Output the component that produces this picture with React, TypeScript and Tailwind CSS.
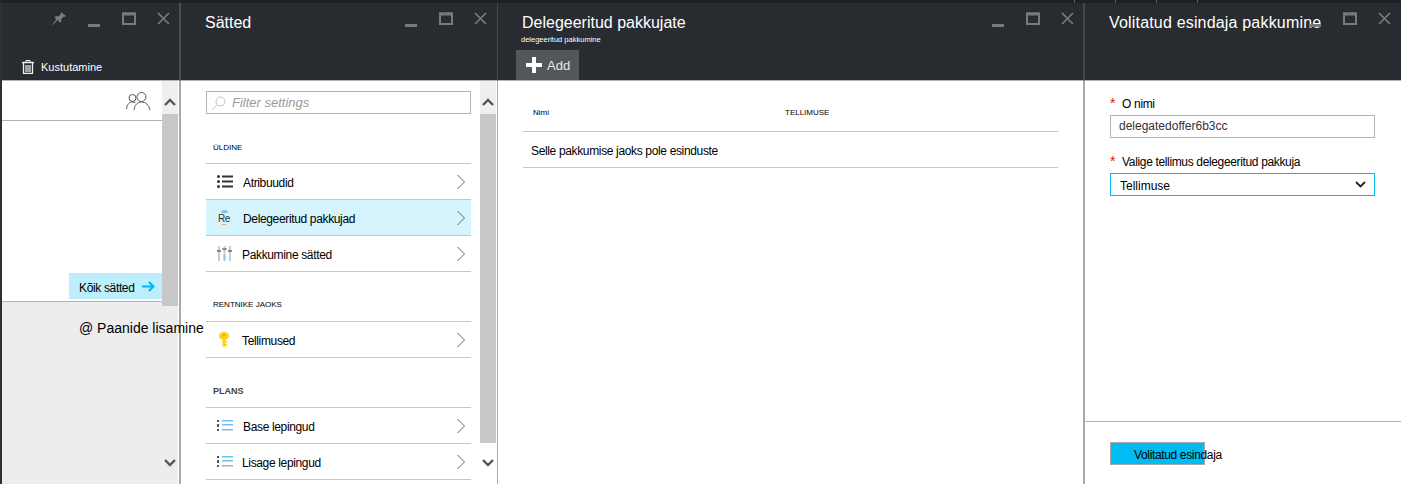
import React from 'react';

const FONT = 'font-["Liberation_Sans",Arial,sans-serif]';

function Controls({ pin, pad }: { pin?: boolean; pad: string }) {
  return (
    <div className={`flex shrink-0 items-start pt-[9px] ${pad}`}>
      {pin && (
        <svg width="14" height="13" viewBox="0 0 14 13" className="mr-[22px]" fill="#777b7f">
          <path d="M9 0 L14 4 L12.800 5 L11.800 4.600 L9 7.500 L9.500 9.500 L8 10.500 L5.500 8 L1 13 L0.500 12.500 L4.300 7 L2.500 5.300 L4 4 L6.300 4.500 L9.200 1.800 L8.500 1 Z" />
        </svg>
      )}
      <svg width="12" height="15" viewBox="0 0 12 15" className="mr-[22px]" fill="#777b7f">
        <rect x="0" y="12" width="12" height="3" />
      </svg>
      <svg width="14" height="13" viewBox="0 0 14 13" className="mr-[21px]" fill="none" stroke="#777b7f">
        <rect x="1" y="1.500" width="12" height="10.500" strokeWidth="2" />
        <rect x="1" y="1" width="12" height="2" fill="#777b7f" strokeWidth="1" />
      </svg>
      <svg width="13" height="13" viewBox="0 0 13 13" fill="none" stroke="#777b7f" strokeWidth="1.700">
        <path d="M1 1 L12 12 M12 1 L1 12" />
      </svg>
    </div>
  );
}

function Scroller({ thumb, bottom }: { thumb: string; bottom: string }) {
  return (
    <div className="flex w-[16px] shrink-0 flex-col items-stretch">
      <div className="flex h-[33px] shrink-0 items-center justify-center bg-[#efefef] pt-[9px]">
        <svg width="12" height="8" viewBox="0 0 12 8" fill="none" stroke="#555" strokeWidth="2.400">
          <path d="M1 7 L6 2 L11 7" />
        </svg>
      </div>
      <div className={`${thumb} shrink-0 bg-[#c8c8c8]`} />
      <div className={`flex flex-1 items-end justify-center pb-[17px] ${bottom}`}>
        <svg width="12" height="8" viewBox="0 0 12 8" fill="none" stroke="#555" strokeWidth="2.400">
          <path d="M1 1 L6 6 L11 1" />
        </svg>
      </div>
    </div>
  );
}

function Chevron() {
  return (
    <svg width="10" height="16" viewBox="0 0 10 16" fill="none" stroke="#666" strokeWidth="1">
      <path d="M1.500 1 L8.500 8 L1.500 15" />
    </svg>
  );
}

function ListDark() {
  return (
    <svg width="16" height="13" viewBox="0 0 16 13" fill="#333">
      <circle cx="1.500" cy="1.500" r="1.500" />
      <rect x="5" y="0.500" width="11" height="2" />
      <circle cx="1.500" cy="6.500" r="1.500" />
      <rect x="5" y="5.500" width="11" height="2" />
      <circle cx="1.500" cy="11.500" r="1.500" />
      <rect x="5" y="10.500" width="11" height="2" />
    </svg>
  );
}

function ListBlue() {
  return (
    <svg width="16" height="11" viewBox="0 0 16 11">
      <g fill="#555">
        <rect x="0" y="0" width="2" height="2" />
        <rect x="0" y="4" width="2" height="3" />
        <rect x="0" y="9" width="2" height="2" />
      </g>
      <g fill="#6fc0ea">
        <rect x="5" y="0" width="11" height="1" />
        <rect x="5" y="4" width="11" height="1" />
        <rect x="5" y="9" width="11" height="1" />
      </g>
      <g fill="#c5dbe6">
        <rect x="5" y="1" width="11" height="1" />
        <rect x="5" y="5" width="11" height="1" />
        <rect x="5" y="10" width="11" height="1" />
      </g>
    </svg>
  );
}

function Sliders() {
  return (
    <svg width="15" height="15" viewBox="0 0 15 15">
      <g fill="#c4cdd2">
        <rect x="1" y="0" width="2" height="15" />
        <rect x="6.500" y="0" width="2" height="15" />
        <rect x="12" y="0" width="2" height="15" />
      </g>
      <g fill="#80868a">
        <rect x="0" y="4" width="4" height="2" />
        <rect x="11" y="4" width="4" height="2" />
        <rect x="5.500" y="2" width="4" height="2" />
      </g>
      <rect x="6.500" y="9" width="2" height="5" fill="#8ccbe8" />
    </svg>
  );
}

function KeyIcon() {
  return (
    <svg width="10" height="15" viewBox="0 0 10 15" fill="#fcd116">
      <path d="M5 0 C8 0 10 1.800 10 4 C10 5.800 8.500 7 6.500 7.600 L6.500 9 L8 9 L8 10.500 L6.500 10.500 L6.500 12 L8 12 L8 13.500 L5 15 L3.500 14 L3.500 7.600 C1.500 7 0 5.800 0 4 C0 1.800 2 0 5 0 Z" />
      <rect x="3.500" y="2.500" width="3" height="1.500" fill="#e0a800" />
    </svg>
  );
}

function ReIcon() {
  return (
    <div className="-mt-[1px] flex w-[14px] flex-col items-center text-[10px] leading-[10px] text-[#333]">
      <div className="mb-[1px] h-[3px] w-[7px] rounded-t-full bg-[#7ec6e8]" />
      <span>Re</span>
      <div className="h-[1px] w-[4px] bg-[#e8a05a]" />
    </div>
  );
}

function Row({
  icon,
  label,
  active,
  gap,
}: {
  icon: React.ReactNode;
  label: string;
  active?: boolean;
  gap: string;
}) {
  return (
    <div
      className={`flex h-[36px] items-center border-b border-[#c8c8c8] pr-[5px] pl-[11px] text-[12px] tracking-[-0.35px] text-black ${
        active ? 'bg-[#d5f4fd]' : ''
      }`}
    >
      <div className={`flex ${gap} shrink-0 items-center`}>{icon}</div>
      <span className="flex-1 pt-[2px] whitespace-nowrap">{label}</span>
      <Chevron />
    </div>
  );
}

export default function App() {
  return (
    <div className={`flex h-[484px] w-[1401px] flex-col overflow-hidden bg-[#282c31] ${FONT}`}>
      {/* top strip */}
      <div className="flex h-[3px] shrink-0 justify-end gap-[40px] bg-[#1e2125] pr-[203px]">
        <div className="h-[3px] w-px bg-[#55595d]" />
        <div className="h-[3px] w-px bg-[#55595d]" />
        <div className="h-[3px] w-px bg-[#55595d]" />
        <div className="h-[3px] w-px bg-[#55595d]" />
      </div>

      <div className="flex min-h-0 flex-1">
        {/* Blade 1 */}
        <div className="flex w-[181px] shrink-0 flex-col border-l-2 border-l-[#2d3136]">
          <div className="flex h-[78px] shrink-0 flex-col border-r-2 border-b border-r-[#4a4e52] border-b-[#b4b4b4] bg-[#282c31]">
            <div className="flex justify-end">
              <Controls pin pad="pr-[9px]" />
            </div>
            <div className="mt-[32px] flex items-center gap-[7px] pl-[20px] text-[11px] text-white">
              <svg width="12" height="14" viewBox="0 0 12 14" fill="none" stroke="#f0f0f0">
                <path d="M0 2.500 H12" strokeWidth="1.500" />
                <path d="M4 2 V0.500 H8 V2" />
                <path d="M1.500 3 V13.500 H10.500 V3" strokeWidth="1.300" />
                <path d="M4 5 V12 M6 5 V12 M8 5 V12" strokeWidth="1.200" />
              </svg>
              <span>Kustutamine</span>
            </div>
          </div>
          <div className="flex min-h-0 flex-1 border-r-2 border-[#a9a9a9] bg-white">
            <div className="flex w-[160px] shrink-0 flex-col">
              <div className="flex h-[40px] shrink-0 items-center justify-end border-b border-[#b4b4b4] pr-[11px]">
                <svg width="25" height="20" viewBox="0 0 25 20" fill="none" stroke="#555" strokeWidth="1">
                  <circle cx="6.500" cy="7" r="3.500" />
                  <path d="M0.500 18 C1 13 3.500 11 6.500 11 C7.500 11 8.500 11.300 9.300 11.800" />
                  <circle cx="15.500" cy="6" r="4.500" />
                  <path d="M8 19 C8.500 14 11.500 11 15.500 11 C19.500 11 23 14 24 19" />
                </svg>
              </div>
              <div className="flex h-[181px] shrink-0 items-end justify-end border-b border-[#b4b4b4] pb-[2px]">
                <div className="flex h-[26px] w-[93px] items-center gap-[7px] bg-[#bdeefb] pl-[10px] text-[12px] tracking-[-0.35px] whitespace-nowrap text-black">
                  <span className="pt-[3px]">Kõik sätted</span>
                  <svg width="13" height="11" viewBox="0 0 13 11" fill="none" stroke="#00b4f0" strokeWidth="2">
                    <path d="M0 5.500 H11.500 M7 1 L11.500 5.500 L7 10" />
                  </svg>
                </div>
              </div>
              <div className="relative z-10 flex-1 bg-[#ededed] pt-[16px] pl-[77px] text-[14px] whitespace-nowrap text-black">
                @ Paanide lisamine
              </div>
            </div>
            <Scroller thumb="h-[192px]" bottom="bg-[#ededed]" />
          </div>
        </div>

        {/* Blade 2 */}
        <div className="flex w-[317px] shrink-0 flex-col">
          <div className="flex h-[78px] shrink-0 justify-between border-r border-b border-r-[#44484c] border-b-[#b4b4b4] bg-[#282c31]">
            <div className="pt-[10px] pl-[24px] text-[16px] leading-[20px] text-white">Sätted</div>
            <Controls pad="pr-[10px]" />
          </div>
          <div className="flex min-h-0 flex-1 border-r border-[#a9a9a9] bg-white pr-[1px]">
            <div className="flex min-w-0 flex-1 flex-col pt-[10px] pr-[9px] pl-[25px]">
              <div className="flex h-[23px] shrink-0 items-center gap-[6px] border border-[#b4b4b4] pl-[5px] text-[13px] text-[#9a9a9a] italic">
                <svg width="14" height="14" viewBox="0 0 14 14" fill="none" stroke="#c4c4c4" strokeWidth="1">
                  <circle cx="8.500" cy="5.500" r="4.500" />
                  <path d="M5 9 L0.500 13.500" />
                </svg>
                <span>Filter settings</span>
              </div>
              <div className="mt-[28px] h-[21px] shrink-0 pl-[7px] text-[8px] text-black">ÜLDINE</div>
              <div className="border-t border-[#c8c8c8]">
                <Row icon={<ListDark />} label="Atribuudid" gap="w-[26px]" />
                <Row icon={<ReIcon />} label="Delegeeritud pakkujad" active gap="w-[26px]" />
                <Row icon={<Sliders />} label="Pakkumine sätted" gap="w-[25px]" />
              </div>
              <div className="mt-[27px] h-[22px] shrink-0 pl-[7px] text-[8px] text-black">RENTNIKE JAOKS</div>
              <div className="border-t border-[#c8c8c8]">
                <Row icon={<KeyIcon />} label="Tellimused" gap="w-[25px] pl-[2px]" />
              </div>
              <div className="mt-[27px] h-[22px] shrink-0 pl-[7px] text-[9px] font-bold text-[#444]">PLANS</div>
              <div className="border-t border-[#c8c8c8]">
                <Row icon={<ListBlue />} label="Base lepingud" gap="w-[26px]" />
                <Row icon={<ListBlue />} label="Lisage lepingud" gap="w-[25px]" />
              </div>
            </div>
            <Scroller thumb="h-[329px]" bottom="" />
          </div>
        </div>

        {/* Blade 3 */}
        <div className="flex w-[587px] shrink-0 flex-col">
          <div className="flex h-[78px] shrink-0 flex-col border-r-2 border-b border-r-[#44484c] border-b-[#b4b4b4] bg-[#282c31]">
            <div className="flex h-[47px] justify-between">
              <div className="pt-[10px] pl-[24px]">
                <div className="text-[16px] leading-[20px] text-white">Delegeeritud pakkujate</div>
                <div className="-ml-px mt-[2px] text-[7.500px] leading-[10px] text-white">delegeeritud pakkumine</div>
              </div>
              <Controls pad="pr-[9px]" />
            </div>
            <div className="ml-[18px] flex h-[30px] w-[63px] items-center gap-[5px] bg-[#53575c] pl-[10px] text-[13px] text-[#e8e8e8]">
              <svg width="16" height="16" viewBox="0 0 16 16" fill="white">
                <rect x="6" y="0" width="4" height="16" />
                <rect x="0" y="6" width="16" height="4" />
              </svg>
              <span className="pt-[2px]">Add</span>
            </div>
          </div>
          <div className="min-h-0 flex-1 border-r-2 border-[#a9a9a9] bg-white pt-[21px] pr-[25px] pl-[25px]">
            <div className="flex h-[30px] items-start border-b border-[#c8c8c8] pl-[10px] text-[8px] leading-[22px] text-black">
              <span className="w-[252px]">Nimi</span>
              <span>TELLIMUSE</span>
            </div>
            <div className="flex h-[36px] items-center border-b border-[#c8c8c8] pt-[2px] pl-[8px] text-[12px] tracking-[-0.35px] text-black">
              Selle pakkumise jaoks pole esinduste
            </div>
          </div>
        </div>

        {/* Blade 4 */}
        <div className="flex min-w-0 flex-1 flex-col">
          <div className="flex h-[78px] shrink-0 justify-between border-b border-[#b4b4b4] bg-[#282c31]">
            <div className="w-0 flex-1 pt-[10px] pl-[24px] text-[16px] leading-[20px] tracking-[0.18px] whitespace-nowrap text-white">
              Volitatud esindaja pakkumine
            </div>
            <Controls pad="pr-[10px]" />
          </div>
          <div className="flex min-h-0 flex-1 flex-col bg-white">
            <div className="h-[341px] shrink-0 border-b border-[#b4b4b4] pt-[15px] pr-[26px] pl-[25px] text-[12px] text-black">
              <div className="flex h-[19px] items-start gap-[7px] leading-[16px] tracking-[-0.35px]">
                <span className="text-[14px] leading-[14px] text-[#e81123]">*</span>
                <span>O nimi</span>
              </div>
              <div className="flex h-[23px] items-center border border-[#b4b4b4] pb-[1px] pl-[8px] text-[#333]">
                delegatedoffer6b3cc
              </div>
              <div className="mt-[16px] flex h-[19px] items-start gap-[7px] leading-[16px] tracking-[-0.35px]">
                <span className="text-[14px] leading-[14px] text-[#e81123]">*</span>
                <span>Valige tellimus delegeeritud pakkuja</span>
              </div>
              <div className="flex h-[23px] items-center justify-between border border-[#00bcf2] pr-[8px] pl-[9px]">
                <span className="pt-[2px]">Tellimuse</span>
                <svg width="11" height="7" viewBox="0 0 11 7" fill="none" stroke="#222" strokeWidth="1.800">
                  <path d="M1 1 L5.500 5.500 L10 1" />
                </svg>
              </div>
            </div>
            <div className="pt-[20px] pl-[25px]">
              <div className="flex h-[23px] w-[95px] items-center border border-[#a9a9a9] bg-[#00bcf2] pt-[2px] pl-[23px] text-[12px] tracking-[-0.35px] whitespace-nowrap text-black">
                Volitatud esindaja
              </div>
            </div>
          </div>
        </div>
      </div>
    </div>
  );
}
